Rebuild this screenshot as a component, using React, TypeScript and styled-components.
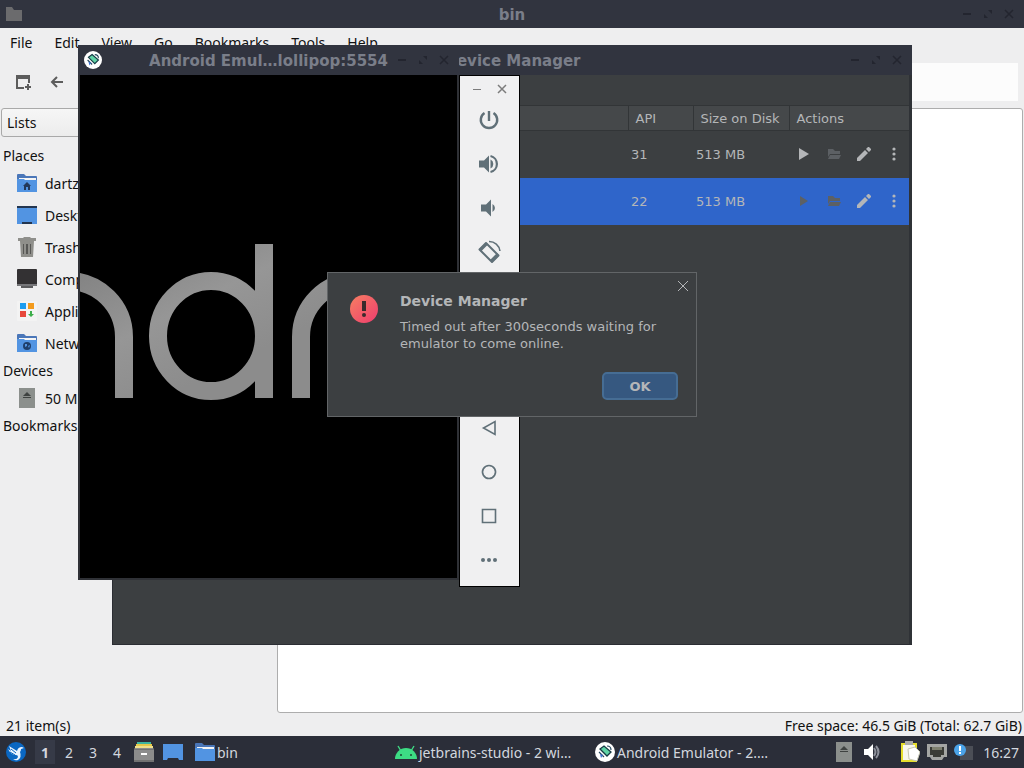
import { ReactNode, useState } from "react";
import styled, { createGlobalStyle, css } from "styled-components";

const GlobalStyle = createGlobalStyle`
  * {
    box-sizing: border-box;
  }
  body {
    margin: 0;
    font-family: "Noto Sans", "Open Sans", sans-serif;
    font-size: 14px;
    color: #111111;
  }
  button, input, select {
    font: inherit;
    color: inherit;
    margin: 0;
    padding: 0;
    border: none;
    background: none;
  }
  svg {
    display: block;
    flex: none;
  }
`;

const StyledDesktop = styled.div`
  position: relative;
  display: flex;
  flex-direction: column;
  height: 100vh;
  overflow: hidden;
  background: #eeeeef;
`;

/* ---------- window frames ---------- */

const StyledTitleBar = styled.header<{ $height: number }>`
  display: grid;
  grid-template-columns: 1fr auto 1fr;
  align-items: center;
  flex: none;
  height: ${(p) => p.$height}px;
  padding: 0 6px;
  background: #31343f;
  color: #7a7e89;
`;

const StyledTitle = styled.h1`
  margin: 0;
  padding-top: 1px;
  font-family: "DejaVu Sans", sans-serif;
  font-size: 15px;
  line-height: 18px;
  font-weight: bold;
  white-space: nowrap;
`;

const StyledWindowButtons = styled.div`
  display: flex;
  justify-content: flex-end;
  gap: 5px;
`;

const StyledWindowButton = styled.button`
  display: flex;
  align-items: center;
  justify-content: center;
  width: 16px;
  height: 16px;
  color: #23252f;
`;

/* ---------- file manager ---------- */

const StyledFileManager = styled.section`
  display: flex;
  flex-direction: column;
  flex: 1;
  min-height: 0;
`;

const StyledMenuBar = styled.nav`
  display: flex;
  gap: 22px;
  height: 30px;
  padding: 0 10px 2px;
  align-items: center;
`;

const StyledToolbar = styled.div`
  display: flex;
  align-items: center;
  gap: 16px;
  height: 50px;
  padding: 0 6px 3px 15px;
  color: #5c5c5c;
`;

const StyledToolButton = styled.button`
  display: flex;
`;

const StyledLocation = styled.input`
  flex: 1;
  height: 38px;
  margin-left: 60px;
  padding: 0 8px;
  background: #fcfcfc;
`;

const StyledPanes = styled.div`
  display: flex;
  flex: 1;
  min-height: 0;
  padding-right: 1px;
`;

const StyledSidebar = styled.aside`
  flex: none;
  width: 277px;
  padding: 0 0 0 1px;
`;

const StyledModeSelect = styled.select`
  appearance: none;
  display: block;
  width: 100%;
  height: 29px;
  margin-bottom: 7px;
  padding: 0 5px;
  border: 1px solid #a9a9a9;
  border-radius: 3px;
  background: linear-gradient(#f6f6f6, #ececec);
`;

const StyledPlacesTitle = styled.h2`
  margin: 0;
  padding-left: 2px;
  font-size: 14px;
  font-weight: normal;
  line-height: 23px;
`;

const StyledPlace = styled.a`
  display: flex;
  align-items: center;
  gap: 8px;
  height: 32px;
  padding-left: 16px;
  color: inherit;
  text-decoration: none;
  white-space: nowrap;
`;

const StyledFileArea = styled.main`
  flex: 1;
  border: 1px solid #adadad;
  border-radius: 3px;
  background: #ffffff;
`;

const StyledStatusBar = styled.footer`
  display: flex;
  justify-content: space-between;
  height: 23px;
  padding: 2px 2px 0 6px;
  line-height: 22px;
`;

/* ---------- device manager ---------- */

const StyledDeviceWindow = styled.section`
  position: absolute;
  left: 112px;
  top: 45px;
  display: flex;
  flex-direction: column;
  width: 800px;
  height: 600px;
  background: #3c3f41;
  border: solid #2b2d33;
  border-width: 0 0 1px 1px;
  font-family: "DejaVu Sans", sans-serif;
  font-size: 13px;
  color: #b4b6b8;
`;

const StyledDeviceBody = styled.div`
  flex: 1;
  padding-top: 30px;
  border-right: 3px solid #2f3236;
`;

const StyledDeviceTable = styled.table`
  width: 100%;
  border-collapse: collapse;
  table-layout: fixed;
`;

const StyledHeadCell = styled.th<{ $width?: number }>`
  width: ${(p) => (p.$width ? `${p.$width}px` : "auto")};
  height: 25px;
  padding: 0 0 0 7px;
  border: solid #323537;
  border-width: 1px 0 1px 1px;
  background: #45484a;
  font-weight: normal;
  text-align: left;
  white-space: nowrap;
`;

const StyledDeviceRow = styled.tr<{ $selected: boolean }>`
  height: 47px;
  ${(p) =>
    p.$selected &&
    css`
      background: #2f65ca;
    `}
`;

const StyledCell = styled.td`
  padding: 0 0 0 3px;
`;

const StyledActions = styled.div`
  display: flex;
  gap: 14px;
  padding-left: 4px;
`;

const StyledActionButton = styled.button`
  display: flex;
  &:disabled {
    color: #5c6064;
  }
`;

/* ---------- emulator ---------- */

const StyledEmulatorWindow = styled.section`
  position: absolute;
  left: 78px;
  top: 45px;
  display: flex;
  flex-direction: column;
  width: 381px;
  height: 535px;
  background: #2f3136;
`;

const StyledScreen = styled.div`
  flex: 1;
  margin: 0 2px;
  border-bottom: 2px solid #2f3136;
  background: #000000;
`;

const StyledEmulatorTools = styled.aside`
  position: absolute;
  left: 459px;
  top: 75px;
  display: flex;
  flex-direction: column;
  align-items: flex-start;
  width: 61px;
  height: 512px;
  padding-left: 7px;
  border: 1px solid #000000;
  background: #f0f0f1;
  color: #607078;
`;

const StyledToolsHead = styled.div`
  display: flex;
  gap: 9px;
  height: 22px;
  padding: 5px 0 0 2px;
  color: #7c7c7c;
  & > button {
    color: inherit;
  }
`;

const StyledEmulatorTool = styled.button`
  display: flex;
  align-items: center;
  justify-content: center;
  width: 44px;
  height: 44px;
`;

// keeps the space of the buttons that the dialog covers
const StyledToolsGap = styled.div`
  height: 132px;
`;

/* ---------- dialog ---------- */

const StyledDialog = styled.section`
  position: absolute;
  left: 327px;
  top: 272px;
  display: grid;
  grid-template-columns: 28px 1fr;
  column-gap: 22px;
  width: 370px;
  height: 145px;
  padding: 19px 18px 16px 22px;
  border: 1px solid #626567;
  background: #3c3f41;
  font-family: "DejaVu Sans", sans-serif;
  font-size: 13px;
  color: #b4b6b8;
  & > svg {
    margin-top: 3px;
  }
`;

const StyledDialogContent = styled.div`
  display: flex;
  flex-direction: column;
`;

const StyledDialogTitle = styled.h2`
  margin: 0 0 7px;
  font-size: 14px;
  line-height: 19px;
`;

const StyledDialogText = styled.p`
  margin: 0;
  line-height: 17px;
`;

const StyledDialogClose = styled.button`
  position: absolute;
  right: 7px;
  top: 7px;
  display: flex;
`;

const StyledOkButton = styled.button`
  align-self: flex-end;
  width: 76px;
  height: 28px;
  margin-top: auto;
  border: 2px solid #466d94;
  border-radius: 5px;
  background: #365880;
  font-weight: bold;
`;

/* ---------- panel ---------- */

const StyledPanel = styled.footer`
  display: flex;
  align-items: center;
  flex: none;
  height: 32px;
  padding: 0 5px 0 6px;
  background: #2b2e39;
  color: #d3d7df;
`;

const StyledLauncher = styled.button`
  display: flex;
  margin-right: 9px;
`;

const StyledPager = styled.div`
  display: flex;
  gap: 4px;
  margin-right: 7px;
`;

const StyledPagerButton = styled.button<{ $active: boolean }>`
  width: 20px;
  height: 24px;
  background: ${(p) => (p.$active ? "#363a47" : "none")};
  font-weight: ${(p) => (p.$active ? "bold" : "normal")};
`;

const StyledQuickLaunch = styled.div`
  display: flex;
  gap: 9px;
  margin-right: 12px;
`;

const StyledTasks = styled.div`
  display: grid;
  grid-template-columns: repeat(3, 200px);
  flex: 1;
`;

const StyledTask = styled.button`
  display: flex;
  align-items: center;
  gap: 2px;
  white-space: nowrap;
`;

const StyledTray = styled.div`
  display: flex;
  align-items: center;
  gap: 7px;
`;

const StyledClock = styled.time`
  margin-left: 2px;
`;

/* ---------- icons ---------- */

const FolderIcon = ({ children }: { children?: ReactNode }) => (
  <svg width="20" height="20" viewBox="0 0 20 20">
    <path d="M0 2a1 1 0 0 1 1-1h6l2 2h10a1 1 0 0 1 1 1v5H0z" fill="#4a76b8" />
    <path d="M2 5h17v4H2z" fill="#f4f4f4" />
    <path d="M0 6h7l1 1h12v12H0z" fill="#5294e2" />
    {children}
  </svg>
);

const HomeIcon = () => (
  <FolderIcon>
    <path d="M10 9l4 4h-1v4h-2v-3H9v3H7v-4H6z" fill="#23395a" />
  </FolderIcon>
);

const NetworkIcon = () => (
  <FolderIcon>
    <circle cx="10" cy="13" r="4" fill="#1f3f6b" />
    <path d="M8 11l2 0 0 2-2 1zM11 13l2-1-1 3z" fill="#5294e2" />
  </FolderIcon>
);

const DesktopIcon = () => (
  <svg width="20" height="20" viewBox="0 0 20 20">
    <path d="M0 1h20v18H0z" fill="#5294e2" />
    <path d="M0 1h20v2H0z" fill="#23354f" />
    <path d="M5 17h10v2H5z" fill="#23354f" />
  </svg>
);

const TrashIcon = () => (
  <svg width="20" height="20" viewBox="0 0 20 20">
    <path d="M1 1h5l1-1h6l1 1h5v3H1z" fill="#8f8f8b" />
    <path d="M3 4h14l-1 16H4z" fill="#8f8f8b" />
    <path d="M6 7h1v10H6zM9 7h2v10H9zM13 7h1v10h-1z" fill="#575755" />
  </svg>
);

const ComputerIcon = () => (
  <svg width="20" height="20" viewBox="0 0 20 20">
    <rect y="0" width="20" height="17" rx="1" fill="#333133" />
    <path d="M0 15h20v1a1 1 0 0 1-1 1H1a1 1 0 0 1-1-1z" fill="#77777a" />
    <path d="M4 17h12v2H4z" fill="#5b5b5d" />
  </svg>
);

const AppsIcon = () => (
  <svg width="20" height="20" viewBox="0 0 20 20">
    <rect width="20" height="20" rx="1" fill="#f3f3f3" />
    <path d="M3 2h6v6H3z" fill="#1e9df0" />
    <path d="M11 2h6v6h-6z" fill="#f39b1d" />
    <path d="M3 10h6v6H3z" fill="#e7483c" />
    <path d="M13 10h2v3h2l-3 3-3-3h2z" fill="#3dae4b" />
  </svg>
);

const DriveIcon = ({ width = 20 }: { width?: number }) => (
  <svg width={width} height="20" viewBox={width === 16 ? "2 0 16 20" : "0 0 20 20"}>
    <path d="M2 0h16v20H2z" fill="#8b8f8c" />
    <path d="M10 4l4 4H6zM6 9h8v1H6z" fill="#3e4240" />
  </svg>
);

const EmulatorIcon = ({ size }: { size: number }) => (
  <svg width={size} height={size} viewBox="0 0 20 20">
    <circle cx="10" cy="10" r="10" fill="#ffffff" />
    <path d="M5 7l4-3 7 6-4 4z" fill="#5fd3a6" stroke="#173b45" strokeWidth="1.3" />
    <path d="M4 10l5 5M12 4q4 0 4 4" fill="none" stroke="#26495e" strokeWidth="1.2" />
    <path d="M5 12l3 1-2 3z" fill="#3b6fd0" />
  </svg>
);

const AndroidIcon = () => (
  <svg width="22" height="20" viewBox="0 0 22 20">
    <path d="M0 17a11 11 0 0 1 22 0z" fill="#3ddc84" />
    <path d="M6 9L3 4M16 9l3-5" stroke="#3ddc84" strokeWidth="1.4" />
    <circle cx="6" cy="13" r="1" fill="#1c4a35" />
    <circle cx="16" cy="13" r="1" fill="#1c4a35" />
  </svg>
);

const BirdIcon = () => (
  <svg width="20" height="20" viewBox="0 0 20 20">
    <circle cx="10" cy="10" r="10" fill="#0a67c2" />
    <path
      d="M3 4l8 5q1-4 5-4l2 1-3 1q0 2-1 3 2 5-2 8-3 1-5-1 4 1 5-2 0-2-2-2-5 0-8-6l3 2z"
      fill="#eaf4ff"
    />
    <path d="M5 7l5 4M4 10l5 3" stroke="#0a67c2" strokeWidth="1" />
  </svg>
);

const CabinetIcon = () => (
  <svg width="20" height="20" viewBox="0 0 20 20">
    <path d="M3 0h14v3H3z" fill="#3cb4a0" />
    <path d="M2 2h16v3H2z" fill="#e5c94a" />
    <path d="M1 4h18v4H1z" fill="#efe08c" />
    <path d="M0 7l1-1h18l1 1v13H0z" fill="#8c8c8c" />
    <path d="M0 7h20v1H0zM0 18h20v2H0z" fill="#727272" />
    <path d="M7 11h6v2H7z" fill="#ffffff" />
  </svg>
);

const PanelDesktopIcon = () => (
  <svg width="20" height="20" viewBox="0 0 20 20">
    <path d="M0 2h20v16h-4l-1-2H5l-1 2H0z" fill="#5294e2" />
  </svg>
);

const ErrorIcon = () => (
  <svg width="28" height="28" viewBox="0 0 28 28">
    <defs>
      <linearGradient id="error" x1="0" y1="0" x2="1" y2="1">
        <stop offset="0" stopColor="#f77f62" />
        <stop offset="1" stopColor="#ee3d6e" />
      </linearGradient>
    </defs>
    <circle cx="14" cy="14" r="14" fill="url(#error)" />
    <path d="M12 6h4v10h-4z" fill="#3a2a2c" />
    <circle cx="14" cy="20" r="2" fill="#3a2a2c" />
  </svg>
);

const BootLogo = () => (
  <svg width="100%" height="330" viewBox="80 75 377 330" preserveAspectRatio="xMinYMin slice">
    <defs>
      <linearGradient id="boot" gradientUnits="userSpaceOnUse" x1="80" y1="240" x2="160" y2="400">
        <stop offset="0" stopColor="#7c7c7c" />
        <stop offset="0.6" stopColor="#969696" />
        <stop offset="1" stopColor="#8c8c8c" />
      </linearGradient>
    </defs>
    <g fill="none" stroke="url(#boot)" strokeWidth="18">
      <path d="M68 281A56 56 0 0 1 124 337V398" />
      <ellipse cx="211" cy="336" rx="53" ry="55" />
      <path d="M273 244V398H255V244z" fill="url(#boot)" stroke="none" />
      <path d="M301 398V337A56 56 0 0 1 357 281" />
    </g>
  </svg>
);

type GlyphProps = { d: string; size?: number; width?: number; fill?: string };

const Glyph = ({ d, size = 16, width = 1, fill = "none" }: GlyphProps) => (
  <svg width={size} height={size} viewBox={`0 0 ${size} ${size}`}>
    <path
      d={d}
      fill={fill}
      stroke={fill === "none" ? "currentColor" : "none"}
      strokeWidth={width}
    />
  </svg>
);

const WindowButtons = () => (
  <StyledWindowButtons>
    <StyledWindowButton aria-label="Minimize">
      <Glyph d="M3 8h8" width={2} />
    </StyledWindowButton>
    <StyledWindowButton aria-label="Maximize">
      <Glyph d="M7 4h4v4zM3 8l4 4H3z" fill="currentColor" />
    </StyledWindowButton>
    <StyledWindowButton aria-label="Close">
      <Glyph d="M3 4l8 8M11 4l-8 8" width={1.5} />
    </StyledWindowButton>
  </StyledWindowButtons>
);

const menus = ["File", "Edit", "View", "Go", "Bookmarks", "Tools", "Help"];

const places = [
  { name: "dartz", icon: <HomeIcon /> },
  { name: "Desktop", icon: <DesktopIcon /> },
  { name: "Trash", icon: <TrashIcon /> },
  { name: "Computer", icon: <ComputerIcon /> },
  { name: "Applications", icon: <AppsIcon /> },
  { name: "Network", icon: <NetworkIcon /> }
];

const devices = [
  { api: 31, size: "513 MB", running: false },
  { api: 22, size: "513 MB", running: true }
];

const emulatorTools = [
  {
    name: "Power",
    icon: <Glyph size={24} width={2.4} d="M12 3v10M7.5 5a8.2 8.2 0 1 0 9 0" />
  },
  {
    name: "Volume up",
    icon: (
      <svg width="24" height="24" viewBox="0 0 24 24" fill="currentColor">
        <path d="M2 8.5v7h5l5 5v-17l-5 5z" />
        <path d="M13.5 7.5v9a5 5 0 0 0 0-9z" />
        <path d="M13.5 4a8.2 8.2 0 0 1 0 16" fill="none" stroke="currentColor" strokeWidth="2.2" />
      </svg>
    )
  },
  {
    name: "Volume down",
    icon: (
      <svg width="24" height="24" viewBox="0 0 24 24" fill="currentColor">
        <path d="M4 8.5v7h5l5 5v-17l-5 5z" />
        <path d="M15.5 8v8a4.5 4.5 0 0 0 0-8z" />
      </svg>
    )
  },
  {
    name: "Rotate",
    icon: (
      <svg width="24" height="24" viewBox="0 0 24 24" fill="none" stroke="currentColor">
        <path d="M9 3L2.5 9.5 15 22l6.500-6.500z" strokeWidth="2" strokeLinejoin="round" />
        <path d="M2 9.5l7-7 2 2-7 7zM13 20l7-7 2 2.500-7 7z" fill="currentColor" stroke="none" />
        <path d="M12 1.5A11 11 0 0 1 23 11" strokeWidth="1.5" />
      </svg>
    )
  }
];

const navigationTools = [
  { name: "Back", icon: <Glyph size={24} width={1.6} d="M18 5.5v13L6.5 12z" /> },
  { name: "Home", icon: <Glyph size={24} width={1.6} d="M12 5.5a6.5 6.5 0 1 0 .01 0z" /> },
  { name: "Overview", icon: <Glyph size={24} width={1.6} d="M5.5 5.5h13v13h-13z" /> },
  {
    name: "More",
    icon: (
      <svg width="24" height="24" viewBox="0 0 24 24" fill="currentColor">
        <circle cx="6" cy="12" r="2" />
        <circle cx="12" cy="12" r="2" />
        <circle cx="18" cy="12" r="2" />
      </svg>
    )
  }
];

export default function App() {
  const [dialogOpen, setDialogOpen] = useState(true);
  const [workspace, setWorkspace] = useState(1);
  const [selectedApi, setSelectedApi] = useState(22);

  return (
    <StyledDesktop>
      <GlobalStyle />

      <StyledFileManager>
        <StyledTitleBar $height={28}>
          <svg width="16" height="16" viewBox="0 0 16 16">
            <path d="M0 1h6l2 3h8v11H0z" fill="#6b6b6d" />
          </svg>
          <StyledTitle>bin</StyledTitle>
          <WindowButtons />
        </StyledTitleBar>
        <StyledMenuBar>
          {menus.map((m) => (
            <button key={m}>{m}</button>
          ))}
        </StyledMenuBar>
        <StyledToolbar>
          <StyledToolButton aria-label="New window">
            <svg width="18" height="18" viewBox="0 0 18 18" fill="currentColor">
              <path d="M1 2h14v8h-2V6H3v8h6v2H1zM12 11h2v2h2v2h-2v2h-2v-2h-2v-2h2z" />
            </svg>
          </StyledToolButton>
          <StyledToolButton aria-label="Back">
            <Glyph d="M14 8H3M8 3L3 8l5 5" width={2} />
          </StyledToolButton>
          <StyledLocation aria-label="Location" />
        </StyledToolbar>
        <StyledPanes>
          <StyledSidebar>
            <StyledModeSelect aria-label="Side pane">
              <option>Lists</option>
            </StyledModeSelect>
            <StyledPlacesTitle>Places</StyledPlacesTitle>
            {places.map((p) => (
              <StyledPlace href="#" key={p.name}>
                {p.icon}
                {p.name}
              </StyledPlace>
            ))}
            <StyledPlacesTitle>Devices</StyledPlacesTitle>
            <StyledPlace href="#">
              <DriveIcon />
              50 MB Volume
            </StyledPlace>
            <StyledPlacesTitle>Bookmarks</StyledPlacesTitle>
          </StyledSidebar>
          <StyledFileArea />
        </StyledPanes>
        <StyledStatusBar>
          <span>21 item(s)</span>
          <span>Free space: 46.5 GiB (Total: 62.7 GiB)</span>
        </StyledStatusBar>
      </StyledFileManager>

      <StyledDeviceWindow>
        <StyledTitleBar $height={30}>
          <span />
          <StyledTitle>Device Manager</StyledTitle>
          <WindowButtons />
        </StyledTitleBar>
        <StyledDeviceBody>
          <StyledDeviceTable>
            <thead>
              <tr>
                <StyledHeadCell />
                <StyledHeadCell $width={65}>API</StyledHeadCell>
                <StyledHeadCell $width={96}>Size on Disk</StyledHeadCell>
                <StyledHeadCell $width={120}>Actions</StyledHeadCell>
              </tr>
            </thead>
            <tbody>
              {devices.map((d) => (
                <StyledDeviceRow
                  key={d.api}
                  $selected={d.api === selectedApi}
                  onClick={() => setSelectedApi(d.api)}
                >
                  <StyledCell />
                  <StyledCell>{d.api}</StyledCell>
                  <StyledCell>{d.size}</StyledCell>
                  <StyledCell>
                    <StyledActions>
                      <StyledActionButton aria-label="Launch" disabled={d.running}>
                        <Glyph
                          d={d.running ? "M4 3l8 5-8 5z" : "M3 2l10 6-10 6z"}
                          fill="currentColor"
                        />
                      </StyledActionButton>
                      <StyledActionButton aria-label="Open folder" disabled>
                        <Glyph d="M2 3h5l2 2h5v3H4l-2 3zM4 9h11l-2 4H2z" fill="currentColor" />
                      </StyledActionButton>
                      <StyledActionButton aria-label="Edit">
                        <Glyph
                          d="M1 15v-3l8-8 3 3-8 8zM10 3l2-2h1l2 2v1l-2 2z"
                          fill="currentColor"
                        />
                      </StyledActionButton>
                      <StyledActionButton aria-label="More actions">
                        <svg width="16" height="16" viewBox="0 0 16 16" fill="currentColor">
                          <circle cx="8" cy="3" r="1.6" />
                          <circle cx="8" cy="8" r="1.6" />
                          <circle cx="8" cy="13" r="1.6" />
                        </svg>
                      </StyledActionButton>
                    </StyledActions>
                  </StyledCell>
                </StyledDeviceRow>
              ))}
            </tbody>
          </StyledDeviceTable>
        </StyledDeviceBody>
      </StyledDeviceWindow>

      <StyledEmulatorWindow>
        <StyledTitleBar $height={30}>
          <EmulatorIcon size={18} />
          <StyledTitle>Android Emul…lollipop:5554</StyledTitle>
          <WindowButtons />
        </StyledTitleBar>
        <StyledScreen>
          <BootLogo />
        </StyledScreen>
      </StyledEmulatorWindow>

      <StyledEmulatorTools>
        <StyledToolsHead>
          <StyledWindowButton aria-label="Minimize">
            <Glyph d="M4 8.5h8" />
          </StyledWindowButton>
          <StyledWindowButton aria-label="Close">
            <Glyph d="M4 4l8 8M12 4l-8 8" width={1.5} />
          </StyledWindowButton>
        </StyledToolsHead>
        {emulatorTools.map((t) => (
          <StyledEmulatorTool key={t.name} aria-label={t.name}>
            {t.icon}
          </StyledEmulatorTool>
        ))}
        <StyledToolsGap />
        {navigationTools.map((t) => (
          <StyledEmulatorTool key={t.name} aria-label={t.name}>
            {t.icon}
          </StyledEmulatorTool>
        ))}
      </StyledEmulatorTools>

      {dialogOpen && (
        <StyledDialog role="dialog" aria-labelledby="dialog-title">
          <ErrorIcon />
          <StyledDialogContent>
            <StyledDialogTitle id="dialog-title">Device Manager</StyledDialogTitle>
            <StyledDialogText>
              Timed out after 300seconds waiting for emulator to come online.
            </StyledDialogText>
            <StyledOkButton onClick={() => setDialogOpen(false)}>OK</StyledOkButton>
          </StyledDialogContent>
          <StyledDialogClose aria-label="Close" onClick={() => setDialogOpen(false)}>
            <Glyph size={12} d="M1 1l10 10M11 1L1 11" />
          </StyledDialogClose>
        </StyledDialog>
      )}

      <StyledPanel>
        <StyledLauncher aria-label="Applications menu">
          <BirdIcon />
        </StyledLauncher>
        <StyledPager>
          {[1, 2, 3, 4].map((n) => (
            <StyledPagerButton key={n} $active={n === workspace} onClick={() => setWorkspace(n)}>
              {n}
            </StyledPagerButton>
          ))}
        </StyledPager>
        <StyledQuickLaunch>
          <CabinetIcon />
          <PanelDesktopIcon />
        </StyledQuickLaunch>
        <StyledTasks>
          <StyledTask>
            <FolderIcon />
            bin
          </StyledTask>
          <StyledTask>
            <AndroidIcon />
            jetbrains-studio - 2 wi…
          </StyledTask>
          <StyledTask>
            <EmulatorIcon size={20} />
            Android Emulator - 2.…
          </StyledTask>
        </StyledTasks>
        <StyledTray>
          <DriveIcon width={16} />
          <svg width="34" height="20" viewBox="0 0 34 20">
            <path d="M5 7h4l5-5v16l-5-5H5z" fill="#ffffff" />
            <path d="M15 6q3 4 0 8M17 4q5 6 0 12" fill="none" stroke="#8d909a" strokeWidth="2" />
          </svg>
          <svg width="20" height="22" viewBox="0 0 20 22">
            <path d="M1 2h16v19H1z" fill="#e6de2e" />
            <path d="M3 4h12v15H3z" fill="#f7f7ef" />
            <path d="M5 0h8v4H5z" fill="#aaaaaa" />
            <path d="M8 8l7-2 5 5-3 9-8-2z" fill="#ffffff" stroke="#c8c8b4" />
          </svg>
          <svg width="20" height="20" viewBox="0 0 20 20">
            <path d="M0 2h20v13h-3l-2 3H5l-2-3H0z" fill="#a4a5a3" />
            <path d="M3 5h14v8h-3v2H6v-2H3z" fill="#3b3c37" />
            <path d="M6 5v3M8 5v3M10 5v3M12 5v3M14 5v3" stroke="#c2c3a8" />
          </svg>
          <svg width="20" height="20" viewBox="0 0 20 20">
            <path d="M6 4h13v14H6z" fill="#4b4e56" />
            <circle cx="6" cy="8" r="6" fill="#4ba3e8" />
            <path d="M5 4h2v5H5zM5 10h2v2H5z" fill="#ffffff" />
          </svg>
          <StyledClock>16:27</StyledClock>
        </StyledTray>
      </StyledPanel>
    </StyledDesktop>
  );
}
